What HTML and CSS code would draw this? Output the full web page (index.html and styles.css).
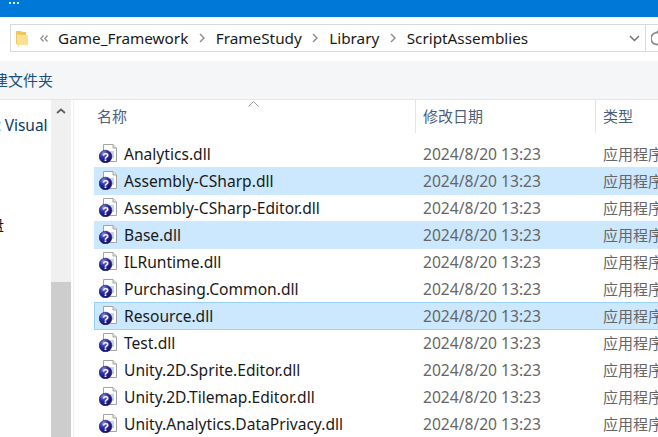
FILE: index.html
```html
<!DOCTYPE html>
<html lang="zh-CN">
<head>
  <meta charset="UTF-8">
  <title>ScriptAssemblies</title>
  <link rel="stylesheet" href="styles.css">
</head>
<body>
  <svg class="defs" width="0" height="0">
    <defs>
      <radialGradient id="ball" cx="35%" cy="25%" r="80%">
        <stop offset="0" stop-color="#8d8de6"/>
        <stop offset=".45" stop-color="#2a2aa6"/>
        <stop offset="1" stop-color="#10105c"/>
      </radialGradient>
    </defs>
    <symbol id="dll" viewBox="0 0 18 19">
      <path d="M4.500 .5H14L17.500 4V17.500H4.500Z" fill="#fdfdfd" stroke="#a3a3a3"/>
      <path d="M14 .5V4H17.500" fill="#e6e6e6" stroke="#a3a3a3"/>
      <path d="M11 7H15V14H11Z" fill="#c4d6e6"/>
      <circle cx="6.500" cy="12.500" r="6.300" fill="url(#ball)" stroke="#14145e" stroke-width=".6"/>
      <text x="6.500" y="16.500" class="dll-mark">?</text>
    </symbol>
  </svg>

  <div class="titlebar">
    <span class="dot"></span><span class="dot"></span><span class="dot"></span>
  </div>

  <div class="addressrow">
    <div class="addressbox">
      <svg class="crumb-folder" width="12" height="17" viewBox="0 0 12 17">
        <path d="M0 1H5L6 2H10V15H3L0 14Z" fill="#efc65f"/>
        <path d="M3 5H12V15H3V17L1 15V4Z" fill="#fbe08f"/>
      </svg>
      <svg class="crumb-back" width="8" height="7" viewBox="0 0 8 7">
        <path d="M3.500 .5L.8 3.500L3.500 6.500M7.500 .5L4.800 3.500L7.500 6.500" fill="none" stroke="#8a8a8a" stroke-width="1.200"/>
      </svg>
      <span class="crumb">Game_Framework</span>
      <svg class="crumb-sep" width="6" height="10" viewBox="0 0 6 10"><path d="M1 1L5 5L1 9" fill="none" stroke="#8a8a8a" stroke-width="1.400"/></svg>
      <span class="crumb">FrameStudy</span>
      <svg class="crumb-sep" width="6" height="10" viewBox="0 0 6 10"><path d="M1 1L5 5L1 9" fill="none" stroke="#8a8a8a" stroke-width="1.400"/></svg>
      <span class="crumb">Library</span>
      <svg class="crumb-sep" width="6" height="10" viewBox="0 0 6 10"><path d="M1 1L5 5L1 9" fill="none" stroke="#8a8a8a" stroke-width="1.400"/></svg>
      <span class="crumb">ScriptAssemblies</span>
      <svg class="crumb-drop" width="11" height="7" viewBox="0 0 11 7"><path d="M1 1L5.500 5.500L10 1" fill="none" stroke="#6d6d6d" stroke-width="1.400"/></svg>
      <div class="refresh">
        <svg width="14" height="16" viewBox="0 0 14 16"><path d="M10 4A6 6 0 1 0 12 9" fill="none" stroke="#8c8c8c" stroke-width="1.800"/><path d="M6 1L11 4L8 7" fill="none" stroke="#8c8c8c" stroke-width="1.400"/></svg>
      </div>
    </div>
  </div>

  <div class="toolbar"><span class="toolbar-label">建文件夹</span></div>

  <div class="main">
    <div class="sidebar">
      <div class="side-visual">t Visual</div>
      <div class="side-disk">盘</div>
    </div>
    <div class="scrollbar">
      <svg class="scroll-up" width="10" height="6" viewBox="0 0 10 6"><path d="M1 5L5 1.500L9 5" fill="none" stroke="#606060" stroke-width="1.800"/></svg>
      <div class="scroll-thumb"></div>
    </div>
    <div class="files">
      <div class="headers">
        <svg class="sort-arrow" width="11" height="6" viewBox="0 0 11 6"><path d="M.5 5.500L5.500 .5L10.500 5.500" fill="none" stroke="#9a9a9a"/></svg>
        <div class="col col-name">名称</div>
        <div class="col col-date">修改日期</div>
        <div class="col col-type">类型</div>
      </div>
      <div class="rows">
        <div class="row"><svg class="icon"><use href="#dll"/></svg><span class="name">Analytics.dll</span><span class="date">2024/8/20 13:23</span><span class="type">应用程序扩展</span></div>
        <div class="row selected"><svg class="icon"><use href="#dll"/></svg><span class="name">Assembly-CSharp.dll</span><span class="date">2024/8/20 13:23</span><span class="type">应用程序扩展</span></div>
        <div class="row"><svg class="icon"><use href="#dll"/></svg><span class="name">Assembly-CSharp-Editor.dll</span><span class="date">2024/8/20 13:23</span><span class="type">应用程序扩展</span></div>
        <div class="row selected"><svg class="icon"><use href="#dll"/></svg><span class="name">Base.dll</span><span class="date">2024/8/20 13:23</span><span class="type">应用程序扩展</span></div>
        <div class="row"><svg class="icon"><use href="#dll"/></svg><span class="name">ILRuntime.dll</span><span class="date">2024/8/20 13:23</span><span class="type">应用程序扩展</span></div>
        <div class="row"><svg class="icon"><use href="#dll"/></svg><span class="name">Purchasing.Common.dll</span><span class="date">2024/8/20 13:23</span><span class="type">应用程序扩展</span></div>
        <div class="row selected focused"><svg class="icon"><use href="#dll"/></svg><span class="name">Resource.dll</span><span class="date">2024/8/20 13:23</span><span class="type">应用程序扩展</span></div>
        <div class="row"><svg class="icon"><use href="#dll"/></svg><span class="name">Test.dll</span><span class="date">2024/8/20 13:23</span><span class="type">应用程序扩展</span></div>
        <div class="row"><svg class="icon"><use href="#dll"/></svg><span class="name">Unity.2D.Sprite.Editor.dll</span><span class="date">2024/8/20 13:23</span><span class="type">应用程序扩展</span></div>
        <div class="row"><svg class="icon"><use href="#dll"/></svg><span class="name">Unity.2D.Tilemap.Editor.dll</span><span class="date">2024/8/20 13:23</span><span class="type">应用程序扩展</span></div>
        <div class="row"><svg class="icon"><use href="#dll"/></svg><span class="name">Unity.Analytics.DataPrivacy.dll</span><span class="date">2024/8/20 13:23</span><span class="type">应用程序扩展</span></div>
      </div>
    </div>
  </div>
</body>
</html>
```

FILE: styles.css
```css
html, body { margin: 0; height: 437px; overflow: hidden; background: #fff; }
body { font-family: "Noto Sans", "Noto Sans CJK SC", sans-serif; font-size: 15px; color: #1a1a1a; display: flex; flex-direction: column; width: 658px; }
.defs { display: block; height: 0; }
.dll-mark { font-family: "Liberation Sans", sans-serif; font-size: 11px; font-weight: bold; fill: #fff; text-anchor: middle; }

.titlebar { height: 17px; background: #0078d7; display: flex; gap: 2px; padding: 2px 0 0 9px; box-sizing: border-box; flex: none; }
.dot { width: 2px; height: 2px; background: #e4f0fb; }

.addressrow { height: 44px; padding: 7px 0 0 10px; box-sizing: border-box; flex: none; }
.addressbox { height: 28px; border: 1px solid #d9d9d9; border-right: 0; display: flex; align-items: center; box-sizing: border-box; padding-left: 5px; }
.crumb-folder { margin-right: 12px; }
.crumb-back { margin-right: 10px; }
.crumb { font-size: 15.3px; }
.crumb-sep { margin: 0 10.7px; }
.crumb-drop { margin-left: auto; margin-right: 5px; }
.refresh { width: 13px; height: 26px; border-left: 1px solid #d9d9d9; display: flex; align-items: center; padding-left: 5px; box-sizing: border-box; overflow: hidden; flex: none; }
.refresh svg { flex: none; }

.toolbar { height: 38px; background: #f5f6f7; border-bottom: 1px solid #e5e5e5; flex: none; display: flex; align-items: center; overflow: hidden; }
.toolbar-label { font-size: 15px; line-height: 20px; color: #1b4f80; margin: 0 0 0 -7px; }

.main { flex: 1; display: flex; min-height: 0; }
.sidebar { width: 51px; flex: none; overflow: hidden; white-space: nowrap; }
.side-visual { margin: 15px 0 0 -5px; color: #0d3a66; font-size: 15.5px; line-height: 20px; }
.side-disk { margin: 80px 0 0 -11px; font-size: 15px; line-height: 20px; }
.scrollbar { width: 20px; flex: none; background: #f0f0f0; display: flex; flex-direction: column; align-items: center; padding-top: 8px; box-sizing: border-box; }
.scroll-up { flex: none; }
.scroll-thumb { margin-top: auto; width: 100%; height: 155px; background: #cdcdcd; }

.files { flex: 1; min-width: 0; border-left: 1px solid #f0f0f0; margin-left: 2px; overflow: hidden; position: relative; }
.headers { height: 33px; display: flex; }
.sort-arrow { position: absolute; left: 174px; top: 1px; }
.col { font-size: 15px; color: #4c607a; line-height: 33px; height: 33px; box-sizing: border-box; white-space: nowrap; }
.col-name { width: 342px; padding-left: 23px; border-right: 1px solid #e5e5e5; }
.col-date { width: 180px; padding-left: 7px; border-right: 1px solid #e5e5e5; }
.col-type { padding-left: 7px; }

.rows { padding-top: 7px; margin-left: 20px; }
.row { height: 27px; display: flex; align-items: center; white-space: nowrap; width: 580px; }
.row.selected { background: #cce8ff; height: 28px; margin-bottom: -1px; padding-bottom: 1px; box-sizing: border-box; position: relative; }
.row.focused { box-shadow: inset 0 0 0 1px #99d1ff; }
.icon { width: 18px; height: 19px; margin-left: 5px; flex: none; }
.name { width: 299px; margin-left: 7px; font-size: 15.6px; flex: none; }
.date { width: 180px; color: #666; font-size: 15.6px; flex: none; }
.type { color: #666; font-size: 15px; }
```
